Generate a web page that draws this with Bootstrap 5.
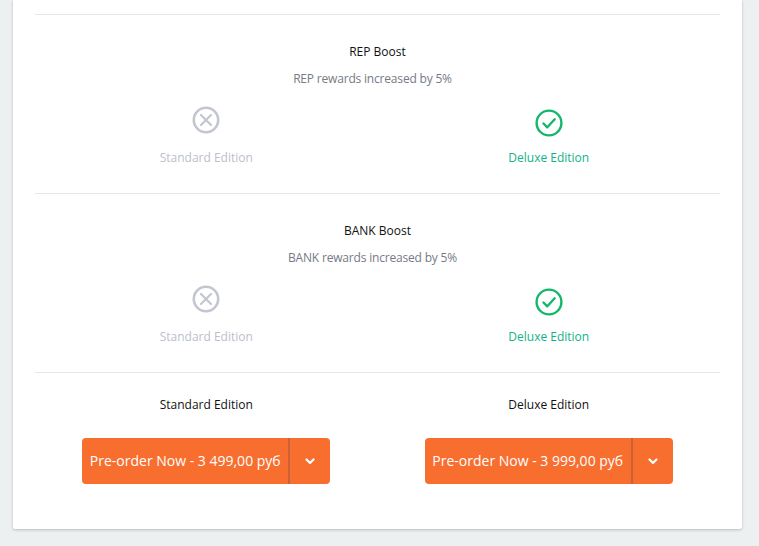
<!DOCTYPE html>
<html lang="en">
<head>
<meta charset="utf-8">
<title>Editions</title>
<link rel="stylesheet" href="https://cdn.jsdelivr.net/npm/bootstrap@5.3.0/dist/css/bootstrap.min.css">
<style>
html,body{height:546px;overflow:hidden}
body{background:#ecf0f1;font-family:"Open Sans","Noto Sans",sans-serif;font-size:12px;color:#111;padding:0 17px 0 13px}
.sheet{background:#fff;height:529px;box-shadow:0 1px 3px rgba(0,0,0,.22);padding:14px 22px 0;border-radius:0 0 2px 2px}
.feat{border-top:1px solid #e6e6e6;height:179px;padding-top:28px;text-align:center}
.feat-title{line-height:17px;height:17px;margin-bottom:10px}
.feat-desc{line-height:17px;height:17px;color:#757b85;margin-bottom:18px;padding-right:10px;letter-spacing:-.185px}
.ed-col{display:flex;flex-direction:column;align-items:center}
.ed-icon{height:42px;display:flex;justify-content:center}
.ed-no{color:#c3c6d1}
.ed-yes{color:#12b76a}
.ed-no .ed-svg{margin-top:1px}
.ed-yes .ed-svg{margin-top:4px}
.ed-label{line-height:17px;margin-top:2px}
.ed-no .ed-label{color:#bcc0cb}
.ed-yes .ed-label{color:#12b28a}
.buy{border-top:1px solid #e6e6e6;padding-top:23px;text-align:center}
.buy-title{line-height:17px;margin-bottom:25px}
.buy-group .btn{background:#f86e2f;border:0;color:#fff;font-size:14px;height:46px;line-height:46px;padding:0;border-radius:4px}
.buy-group .buy-main{width:208px;border-top-right-radius:0;border-bottom-right-radius:0;border-right:2px solid #cb6237}
.buy-group .buy-drop{width:40px;margin-left:0!important;border-top-left-radius:0;border-bottom-left-radius:0;display:flex;align-items:center;justify-content:center}
</style>
</head>
<body>
<div class="sheet">
  <section class="feat">
    <div class="feat-title">REP Boost</div>
    <div class="feat-desc">REP rewards increased by 5%</div>
    <div class="row g-0">
      <div class="col-6 ed-col ed-no">
        <div class="ed-icon"><svg class="ed-svg" width="28" height="28" viewBox="0 0 28 28" fill="none" stroke="currentColor"><circle cx="14" cy="14" r="12.2" stroke-width="2.6"/><path d="M9 9l10 10M19 9L9 19" stroke-width="2.2" stroke-linecap="round"/></svg></div>
        <div class="ed-label">Standard Edition</div>
      </div>
      <div class="col-6 ed-col ed-yes">
        <div class="ed-icon"><svg class="ed-svg" width="28" height="28" viewBox="0 0 28 28" fill="none" stroke="currentColor"><circle cx="14" cy="14" r="12.4" stroke-width="2.4"/><path d="M8.5 14.5l3.8 3.8 7.4-8" stroke-width="2.4" stroke-linecap="round" stroke-linejoin="round"/></svg></div>
        <div class="ed-label">Deluxe Edition</div>
      </div>
    </div>
  </section>
  <section class="feat">
    <div class="feat-title">BANK Boost</div>
    <div class="feat-desc">BANK rewards increased by 5%</div>
    <div class="row g-0">
      <div class="col-6 ed-col ed-no">
        <div class="ed-icon"><svg class="ed-svg" width="28" height="28" viewBox="0 0 28 28" fill="none" stroke="currentColor"><circle cx="14" cy="14" r="12.2" stroke-width="2.6"/><path d="M9 9l10 10M19 9L9 19" stroke-width="2.2" stroke-linecap="round"/></svg></div>
        <div class="ed-label">Standard Edition</div>
      </div>
      <div class="col-6 ed-col ed-yes">
        <div class="ed-icon"><svg class="ed-svg" width="28" height="28" viewBox="0 0 28 28" fill="none" stroke="currentColor"><circle cx="14" cy="14" r="12.4" stroke-width="2.4"/><path d="M8.5 14.5l3.8 3.8 7.4-8" stroke-width="2.4" stroke-linecap="round" stroke-linejoin="round"/></svg></div>
        <div class="ed-label">Deluxe Edition</div>
      </div>
    </div>
  </section>
  <section class="buy">
    <div class="row g-0">
      <div class="col-6 ed-col">
        <div class="buy-title">Standard Edition</div>
        <div class="btn-group buy-group"><button type="button" class="btn buy-main">Pre-order Now - 3 499,00 руб</button><button type="button" class="btn buy-drop" aria-label="More"><svg width="10" height="7" viewBox="0 0 10 7" fill="none" stroke="#fff" stroke-width="2.2" stroke-linecap="round" stroke-linejoin="round"><path d="M1.5 1.5L5 5l3.5-3.5"/></svg></button></div>
      </div>
      <div class="col-6 ed-col">
        <div class="buy-title">Deluxe Edition</div>
        <div class="btn-group buy-group"><button type="button" class="btn buy-main">Pre-order Now - 3 999,00 руб</button><button type="button" class="btn buy-drop" aria-label="More"><svg width="10" height="7" viewBox="0 0 10 7" fill="none" stroke="#fff" stroke-width="2.2" stroke-linecap="round" stroke-linejoin="round"><path d="M1.5 1.5L5 5l3.5-3.5"/></svg></button></div>
      </div>
    </div>
  </section>
</div>
<script src="https://cdn.jsdelivr.net/npm/bootstrap@5.3.0/dist/js/bootstrap.bundle.min.js"></script>
</body>
</html>
